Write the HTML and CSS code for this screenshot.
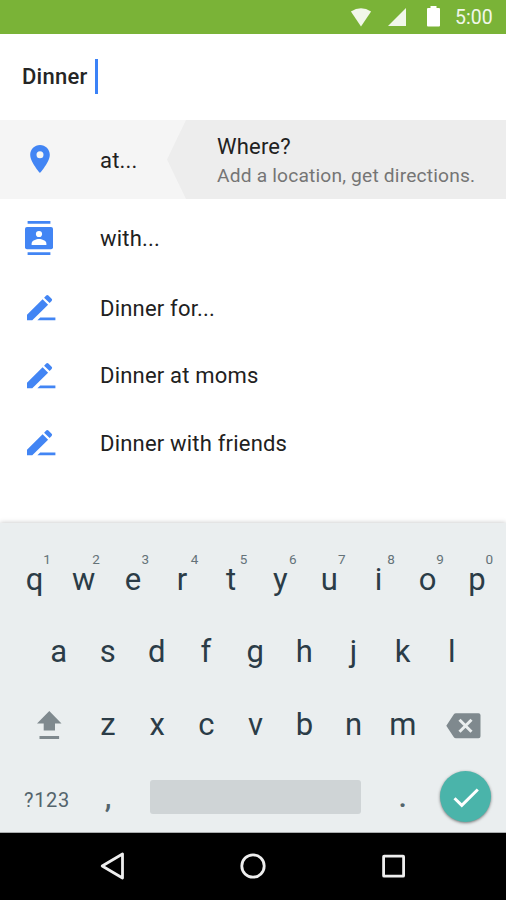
FILE: index.html
```html
<!DOCTYPE html>
<html lang="en">
<head>
<meta charset="utf-8">
<title>New reminder</title>
<link rel="stylesheet" href="styles.css">
</head>
<body>
<div class="phone">
  <header class="status">
    <svg class="wifi" width="22" height="19" viewBox="0 0 22 19"><path d="M.9 3.6Q11-3.2 21.1 3.6L11 18.6z"/></svg>
    <svg class="cell" width="18" height="18" viewBox="0 0 18 18"><path d="M18 0v18H0z"/></svg>
    <svg class="battery" width="13" height="21" viewBox="0 0 13 21"><path d="M3.5 0h6v2H12q1 0 1 1v16.5q0 1-1 1H1q-1 0-1-1V3q0-1 1-1h2.5z"/></svg>
    <span class="clock">5:00</span>
  </header>
  <div class="query"><span class="query-text">Dinner</span><span class="caret"></span></div>
  <main class="suggestions">
    <div class="item active">
      <span class="icon"><svg width="20" height="28" viewBox="5 2 14 20"><path d="M12 2C8.13 2 5 5.13 5 9c0 5.25 7 13 7 13s7-7.75 7-13c0-3.87-3.13-7-7-7zm0 9.500a2.500 2.500 0 0 1 0-5 2.500 2.500 0 0 1 0 5z"/></svg></span>
      <span class="label">at...</span>
      <div class="detail">
        <div class="detail-title">Where?</div>
        <div class="detail-sub">Add a location, get directions.</div>
      </div>
    </div>
    <div class="item contact">
      <span class="icon"><svg width="28" height="34" viewBox="0 0 28 34"><path d="M2.600 0h22.800v2.800H2.600zM2.600 31.200h22.800V34H2.600z"/><rect y="6" width="28" height="22.300" rx="2"/><g class="person"><circle cx="14" cy="13" r="3.100"/><path d="M6.600 24v-1.300c0-3 4.600-4.600 7.400-4.600s7.400 1.600 7.400 4.600V24z"/></g></svg></span>
      <span class="label">with...</span>
    </div>
    <div class="item">
      <span class="icon"><svg class="pencil" width="29" height="26" viewBox="0 0 29 26"><path d="M0 19.700 15.600 4.200l5.500 5.500L5.300 25.200H0zM17.100 2.700 19.200.6q1.100-1 2.200 0l3.200 3.200q1 1 0 2.100l-2 2zM13.200 22.400H28.400v2.800H10.400z"/></svg></span>
      <span class="label">Dinner for...</span>
    </div>
    <div class="item">
      <span class="icon"><svg class="pencil" width="29" height="26" viewBox="0 0 29 26"><path d="M0 19.700 15.600 4.200l5.500 5.500L5.300 25.200H0zM17.100 2.700 19.200.6q1.100-1 2.200 0l3.200 3.200q1 1 0 2.100l-2 2zM13.200 22.400H28.400v2.800H10.400z"/></svg></span>
      <span class="label">Dinner at moms</span>
    </div>
    <div class="item">
      <span class="icon"><svg class="pencil" width="29" height="26" viewBox="0 0 29 26"><path d="M0 19.700 15.600 4.200l5.500 5.500L5.300 25.200H0zM17.100 2.700 19.200.6q1.100-1 2.200 0l3.200 3.200q1 1 0 2.100l-2 2zM13.200 22.400H28.400v2.800H10.400z"/></svg></span>
      <span class="label">Dinner with friends</span>
    </div>
  </main>
  <section class="keyboard">
    <div class="keys top">
      <span class="key">q<i class="hint">1</i></span><span class="key">w<i class="hint">2</i></span><span class="key">e<i class="hint">3</i></span><span class="key">r<i class="hint">4</i></span><span class="key">t<i class="hint">5</i></span><span class="key">y<i class="hint">6</i></span><span class="key">u<i class="hint">7</i></span><span class="key">i<i class="hint">8</i></span><span class="key">o<i class="hint">9</i></span><span class="key">p<i class="hint">0</i></span>
    </div>
    <div class="keys middle">
      <span class="key">a</span><span class="key">s</span><span class="key">d</span><span class="key">f</span><span class="key">g</span><span class="key">h</span><span class="key">j</span><span class="key">k</span><span class="key">l</span>
    </div>
    <div class="keys lower">
      <span class="shift"><svg width="25" height="29" viewBox="0 0 25 29"><path d="M12.300 0 24.500 12.500H18v7H6.700v-7H0zM2.500 25.100h19.600V28H2.500z"/></svg></span>
      <span class="key">z</span><span class="key">x</span><span class="key">c</span><span class="key">v</span><span class="key">b</span><span class="key">n</span><span class="key">m</span>
      <span class="erase"><svg width="35" height="26" viewBox="0 0 35 26"><path class="tag" d="M10 .2h22.500q2 0 2 2v21q0 2-2 2H10q-1.500 0-2.300-1.300L.3 12.700 7.700 1.500Q8.500.2 10 .2z"/><path class="cross" d="m13.500 6.800 12 12m0-12-12 12"/></svg></span>
    </div>
    <div class="keys bottom">
      <span class="symbols">?123</span>
      <span class="punct">,</span>
      <span class="space"></span>
      <span class="punct">.</span>
      <span class="done"><svg width="26" height="20" viewBox="0 0 26 20"><path d="m1.500 10.200 7.300 7.200L24.800 1.500"/></svg></span>
    </div>
  </section>
  <nav class="nav">
    <svg width="26" height="28" viewBox="0 0 26 28"><path d="M23.500 2v24L3.200 14z"/></svg>
    <svg width="26" height="26" viewBox="0 0 26 26"><circle cx="13" cy="13" r="11.200"/></svg>
    <svg width="26" height="26" viewBox="0 0 26 26"><rect x="2.600" y="3.200" width="20" height="20" rx=".5"/></svg>
  </nav>
</div>
</body>
</html>
```
FILE: styles.css
```css
* { box-sizing: border-box; }
body { margin: 0; font-family: Roboto, "Liberation Sans", sans-serif; }
svg { display: block; flex: none; }
.phone { width: 506px; height: 900px; display: flex; flex-direction: column; background: #fff; overflow: hidden; }

.status { height: 34px; flex: none; background: #7ab337; display: flex; align-items: flex-start; padding: 7px 0 0 350px; }
.status svg { fill: #f1f7ea; }
.status .wifi { margin-top: 1px; }
.status .cell { margin: 1px 0 0 16px; }
.status .battery { margin: -1px 0 0 20.500px; fill: #fff; }
.clock { margin-left: 15.500px; font-size: 19.5px; line-height: 22px; color: #f1f7ea; }

.query { height: 86px; flex: none; display: flex; align-items: center; padding: 0 0 2px 22px; }
.query-text { font-size: 22px; font-weight: 500; letter-spacing: .25px; color: #252525; }
.caret { width: 3px; height: 35px; margin-left: 7.500px; background: #3b82f7; }

.suggestions { height: 403px; flex: none; }
.item { height: 67.5px; display: flex; align-items: center; font-size: 22px; letter-spacing: .2px; color: #212121; }
.icon { width: 79px; margin-right: 21px; flex: none; display: flex; justify-content: center; }
.icon svg { fill: #4285f4; margin: 0 0 1px; }
.icon .person { fill: #fff; }
.icon .pencil { margin: 0 0 0 3px; }
.active { height: 79px; background: #f5f5f5; }
.active .label { width: 67px; padding-top: 1px; }
.contact { margin: 6px 0 2px; }
.contact .icon svg { margin: 0 1px 2px 0; }
.detail { flex: 1; height: 79px; background: #ededed; clip-path: polygon(19px 0, 100% 0, 100% 100%, 19px 100%, 0 50%); padding: 13px 0 0 50px; white-space: nowrap; }
.detail-title { font-size: 22px; line-height: 28px; }
.detail-sub { font-size: 19.2px; line-height: 30px; letter-spacing: .18px; color: #757575; }

.keyboard { height: 310px; flex: none; padding-top: 21px; background: #eaeeef; border-bottom: 1px solid #aaadae; box-shadow: 0 0 5px rgba(0,0,0,.25); position: relative; }
.keys { height: 72.4px; display: flex; align-items: center; color: #2b3c47; }
.top { padding-left: 10px; }
.middle { height: 72px; padding-left: 34px; }
.key { width: 49.15px; flex: none; position: relative; text-align: center; font-size: 31px; line-height: 36px; }
.hint { position: absolute; left: 33px; top: -11px; width: 8px; font-size: 13.5px; line-height: 16px; font-style: normal; color: #647278; }
.shift { width: 83.4px; padding: 2px 0 0 37px; }
.shift svg, .tag { fill: #7f898e; }
.erase { margin: 2px 0 0 19px; }
.cross { fill: none; stroke: #eaeeef; stroke-width: 3; }
.symbols { width: 83.4px; padding: 7px 0 0 24px; font-size: 20px; letter-spacing: .7px; color: #54646c; }
.punct { width: 49.2px; text-align: center; font-size: 30px; font-weight: 500; color: #54646c; }
.space { width: 211px; height: 34px; margin: 0 17px 0 17.400px; border-radius: 3px; background: #cfd4d6; }
.done { width: 51px; height: 51px; margin: 0 0 0 12.600px; border-radius: 50%; background: #4ab4aa; box-shadow: 0 1px 3px rgba(0,0,0,.5); display: flex; align-items: center; justify-content: center; }
.done svg { fill: none; stroke: #fff; stroke-width: 3; margin: 2px 0 0 1px; }

.nav { height: 67px; flex: none; background: #000; display: flex; align-items: center; justify-content: space-between; padding: 0 99px 1px; }
.nav svg { fill: none; stroke: #eee; stroke-width: 2.8; stroke-linejoin: round; }
```
